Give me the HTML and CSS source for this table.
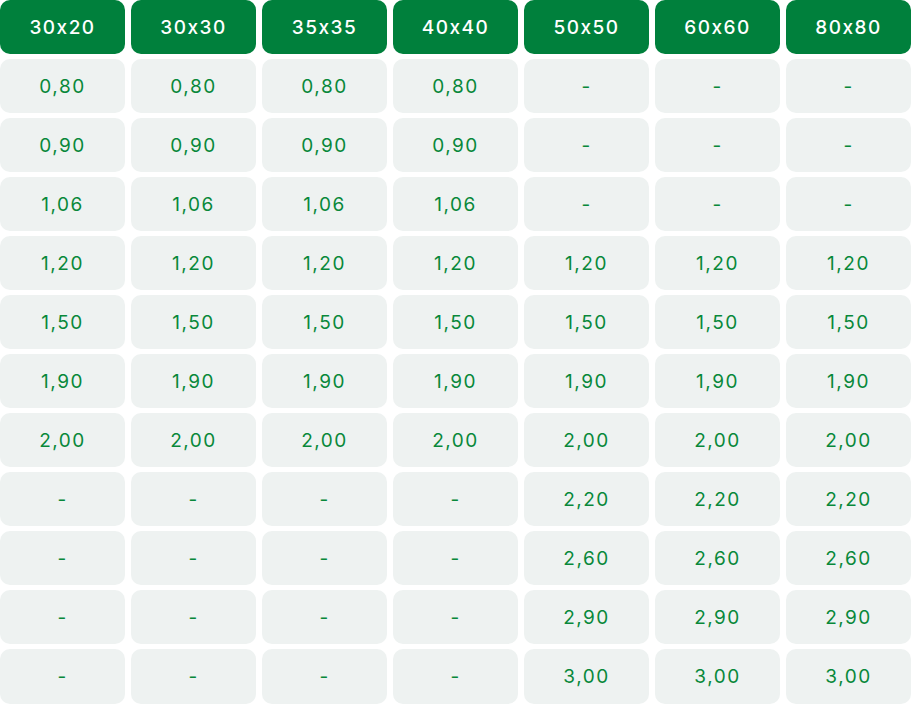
FILE: index.html
```html
<!DOCTYPE html>
<html>
<head>
<meta charset="utf-8">
<link rel="stylesheet" href="styles.css">
</head>
<body>
<div class="table">
  <div class="cell head">30x20</div><div class="cell head">30x30</div><div class="cell head">35x35</div><div class="cell head">40x40</div><div class="cell head">50x50</div><div class="cell head">60x60</div><div class="cell head">80x80</div>
  <div class="cell">0,80</div><div class="cell">0,80</div><div class="cell">0,80</div><div class="cell">0,80</div><div class="cell">-</div><div class="cell">-</div><div class="cell">-</div>
  <div class="cell">0,90</div><div class="cell">0,90</div><div class="cell">0,90</div><div class="cell">0,90</div><div class="cell">-</div><div class="cell">-</div><div class="cell">-</div>
  <div class="cell">1,06</div><div class="cell">1,06</div><div class="cell">1,06</div><div class="cell">1,06</div><div class="cell">-</div><div class="cell">-</div><div class="cell">-</div>
  <div class="cell">1,20</div><div class="cell">1,20</div><div class="cell">1,20</div><div class="cell">1,20</div><div class="cell">1,20</div><div class="cell">1,20</div><div class="cell">1,20</div>
  <div class="cell">1,50</div><div class="cell">1,50</div><div class="cell">1,50</div><div class="cell">1,50</div><div class="cell">1,50</div><div class="cell">1,50</div><div class="cell">1,50</div>
  <div class="cell">1,90</div><div class="cell">1,90</div><div class="cell">1,90</div><div class="cell">1,90</div><div class="cell">1,90</div><div class="cell">1,90</div><div class="cell">1,90</div>
  <div class="cell">2,00</div><div class="cell">2,00</div><div class="cell">2,00</div><div class="cell">2,00</div><div class="cell">2,00</div><div class="cell">2,00</div><div class="cell">2,00</div>
  <div class="cell">-</div><div class="cell">-</div><div class="cell">-</div><div class="cell">-</div><div class="cell">2,20</div><div class="cell">2,20</div><div class="cell">2,20</div>
  <div class="cell">-</div><div class="cell">-</div><div class="cell">-</div><div class="cell">-</div><div class="cell">2,60</div><div class="cell">2,60</div><div class="cell">2,60</div>
  <div class="cell">-</div><div class="cell">-</div><div class="cell">-</div><div class="cell">-</div><div class="cell">2,90</div><div class="cell">2,90</div><div class="cell">2,90</div>
  <div class="cell">-</div><div class="cell">-</div><div class="cell">-</div><div class="cell">-</div><div class="cell">3,00</div><div class="cell">3,00</div><div class="cell">3,00</div>
</div>
</body>
</html>
```

FILE: styles.css
```css
html, body {
  margin: 0;
  padding: 0;
  background: #ffffff;
}
.table {
  display: grid;
  grid-template-columns: repeat(7, 125px);
  grid-template-rows: repeat(11, 54px) 55px;
  column-gap: 6px;
  row-gap: 5px;
  width: 911px;
  font-family: Inter, "Noto Sans", sans-serif;
}
.cell {
  display: flex;
  align-items: center;
  justify-content: center;
  background: #eef2f1;
  border-radius: 10px;
  color: #08883a;
  font-size: 19px;
  font-weight: 400;
  letter-spacing: 1.5px;
}
.head {
  background: #00803c;
  color: #ffffff;
  font-weight: 500;
}
```
